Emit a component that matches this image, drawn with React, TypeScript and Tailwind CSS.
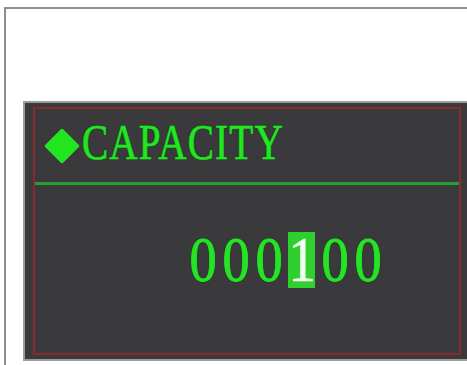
import React from "react";

const serif = { fontFamily: '"Liberation Serif", "Times New Roman", serif' };
const glow = { textShadow: "0 0 1px #0d5a12, 0 0 2px #0d5a12" };

export default function App() {
  const digits = ["0", "0", "0", "1", "0", "0"];
  const sel = 3;
  return (
    <div className="relative w-[467px] h-[365px] overflow-hidden bg-white">
      <div className="ml-[4px] mt-[7px] w-[520px] h-[420px] border-l-2 border-t-2 border-[#8e8e8e]">
        <div className="ml-[17px] mt-[92px] w-[460px] border-t-2 border-l-2 border-b-2 border-[#9c9c9c] bg-[#3a393b] pl-[8px] pt-[4px] pb-[4px]">
          <div className="w-[428px] h-[248px] border-2 border-[#852c32] flex flex-col">
            <div className="h-[73px] flex items-center pl-[9px]">
              <svg width="36" height="36" viewBox="0 0 36 36" className="shrink-0">
                <polygon
                  points="18,2 34,18 18,34 2,18"
                  fill="#22e622"
                  stroke="#22e622"
                  strokeWidth="2.5"
                  strokeLinejoin="round"
                />
              </svg>
              <span
                className="inline-block ml-[2px] mb-[6px] origin-left scale-x-[0.77] text-[51px] leading-none tracking-[1.5px] text-[#22e622] whitespace-nowrap"
                style={{ ...serif, ...glow, WebkitTextStroke: "0.6px #22e622" }}
              >
                CAPACITY
              </span>
            </div>
            <div className="h-[3px] bg-[#23a033]" />
            <div className="flex-1">
              <div className="mt-[47px] ml-[151px] flex h-[56px] items-center" style={serif}>
                {digits.map((d, i) => (
                  <div key={i} className="w-[33px] h-[56px] flex items-center justify-center">
                    {i === sel ? (
                      <span className="w-[27px] h-[56px] flex items-center justify-center bg-[#2fcf2f]">
                        <span
                          className="inline-block scale-x-[0.85] text-[64px] leading-none text-[#f4fff4]"
                          style={{ WebkitTextStroke: "0.6px #f4fff4" }}
                        >
                          {d}
                        </span>
                      </span>
                    ) : (
                      <span
                        className="inline-block scale-x-[0.85] text-[64px] leading-none text-[#26e326]"
                        style={{ ...glow, WebkitTextStroke: "1px #26e326" }}
                      >
                        {d}
                      </span>
                    )}
                  </div>
                ))}
              </div>
            </div>
          </div>
        </div>
      </div>
    </div>
  );
}
